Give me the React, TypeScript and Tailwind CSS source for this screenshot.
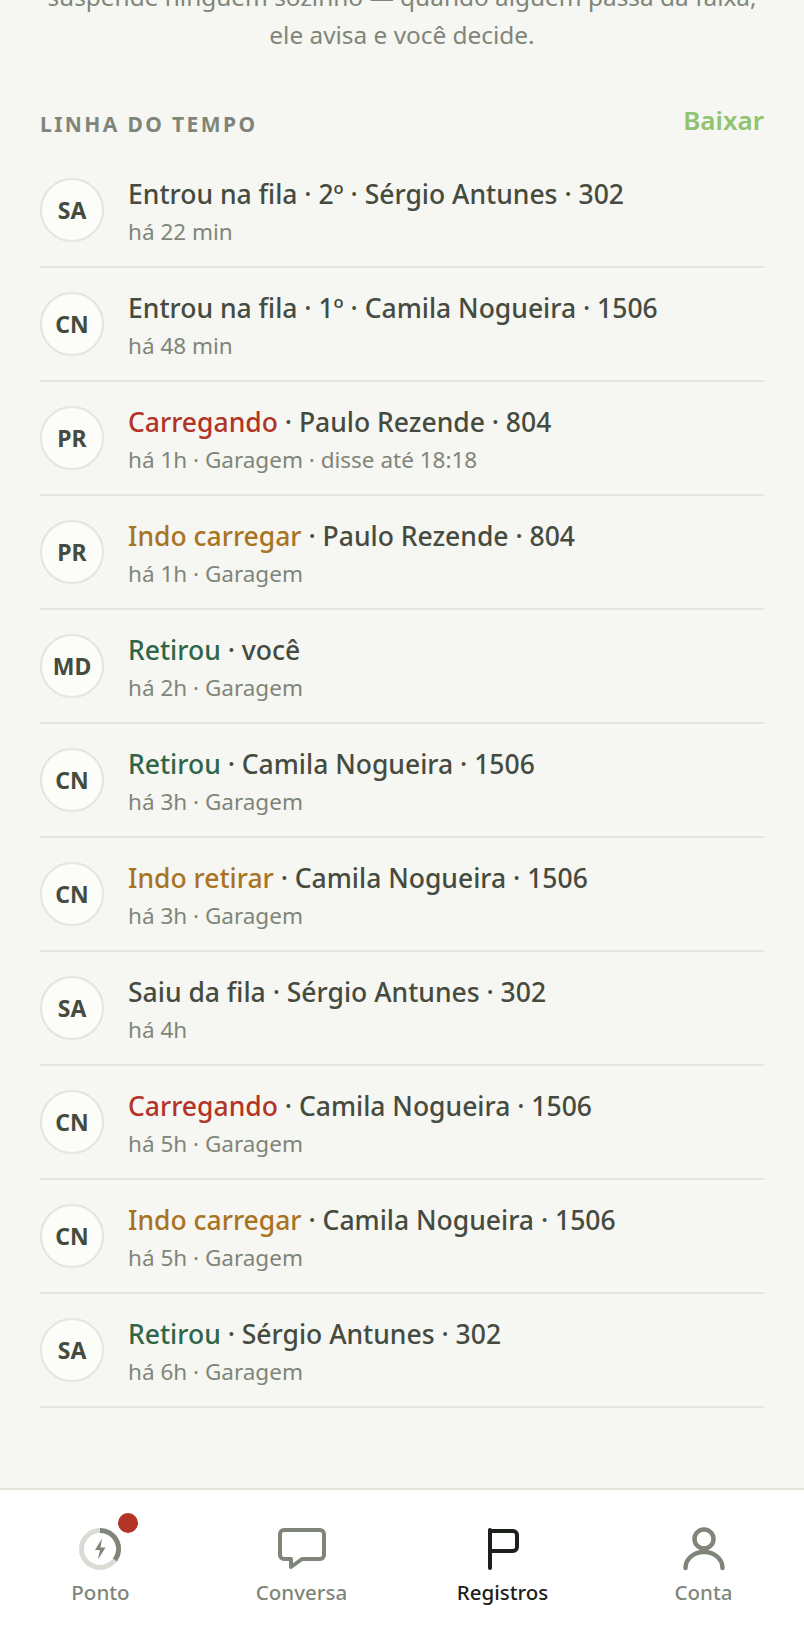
const rows = [
  { who: "SA", lead: "Entrou na fila", tone: "", rest: " · 2º · Sérgio Antunes · 302", sub: "há 22 min" },
  { who: "CN", lead: "Entrou na fila", tone: "", rest: " · 1º · Camila Nogueira · 1506", sub: "há 48 min" },
  { who: "PR", lead: "Carregando", tone: "text-[#b23427]", rest: " · Paulo Rezende · 804", sub: "há 1h · Garagem · disse até 18:18" },
  { who: "PR", lead: "Indo carregar", tone: "text-[#a8741f]", rest: " · Paulo Rezende · 804", sub: "há 1h · Garagem" },
  { who: "MD", lead: "Retirou", tone: "text-[#2f6549]", rest: " · você", sub: "há 2h · Garagem" },
  { who: "CN", lead: "Retirou", tone: "text-[#2f6549]", rest: " · Camila Nogueira · 1506", sub: "há 3h · Garagem" },
  { who: "CN", lead: "Indo retirar", tone: "text-[#a8741f]", rest: " · Camila Nogueira · 1506", sub: "há 3h · Garagem" },
  { who: "SA", lead: "Saiu da fila", tone: "", rest: " · Sérgio Antunes · 302", sub: "há 4h" },
  { who: "CN", lead: "Carregando", tone: "text-[#b23427]", rest: " · Camila Nogueira · 1506", sub: "há 5h · Garagem" },
  { who: "CN", lead: "Indo carregar", tone: "text-[#a8741f]", rest: " · Camila Nogueira · 1506", sub: "há 5h · Garagem" },
  { who: "SA", lead: "Retirou", tone: "text-[#2f6549]", rest: " · Sérgio Antunes · 302", sub: "há 6h · Garagem" },
];

function PontoIcon() {
  return (
    <span className="relative block h-[44px] w-[44px]">
      <svg viewBox="0 0 44 44" className="h-[44px] w-[44px]" fill="none">
        <circle cx="21" cy="22" r="18.5" stroke="#d9dbd5" strokeWidth="5" />
        <path d="M21 3.5A18.5 18.5 0 0 1 36 33" stroke="#7f8679" strokeWidth="5" />
        <path d="M23 11.5l-7 11.5h5l-2 9.5 7.5-12h-5z" fill="#7f8679" />
      </svg>
      <span className="absolute right-[-15px] top-[-14px] h-5 w-5 rounded-full bg-[#b23427]" />
    </span>
  );
}

function ChatIcon() {
  return (
    <svg viewBox="0 0 48 44" className="h-[44px] w-[48px]" fill="none" stroke="#7f8679" strokeWidth="4" strokeLinejoin="round" strokeLinecap="round">
      <path d="M6 3h36a4 4 0 0 1 4 4v21a4 4 0 0 1-4 4H24l-11 8v-8H6a4 4 0 0 1-4-4V7a4 4 0 0 1 4-4z" />
    </svg>
  );
}

function FlagIcon() {
  return (
    <svg viewBox="0 0 32 44" className="h-[44px] w-[32px]" fill="none" stroke="#1c201a" strokeWidth="4" strokeLinejoin="round" strokeLinecap="round">
      <path d="M3 3v38" />
      <path d="M3 4h23a4 4 0 0 1 4 4v12a4 4 0 0 1-4 4H3" />
    </svg>
  );
}

function PersonIcon() {
  return (
    <svg viewBox="0 0 42 44" className="h-[44px] w-[42px]" fill="none" stroke="#7f8679" strokeWidth="4.5" strokeLinecap="round">
      <circle cx="21" cy="12" r="9.5" />
      <path d="M2.5 41c0-9 8-16 18.5-16s18.5 7 18.5 16" />
    </svg>
  );
}

const tabs = [
  { label: "Ponto", icon: <PontoIcon />, active: false },
  { label: "Conversa", icon: <ChatIcon />, active: false },
  { label: "Registros", icon: <FlagIcon />, active: true },
  { label: "Conta", icon: <PersonIcon />, active: false },
];

export default function App() {
  return (
    <div className="flex h-[1640px] w-[804px] flex-col overflow-hidden bg-[#f6f6f2] font-['Noto_Sans','Open_Sans',sans-serif]">
      <main className="flex min-h-0 flex-1 flex-col justify-end px-10 pb-[80px]">
        <p className="whitespace-nowrap text-center text-[24.4px] leading-[38px] text-[#7f8679]">
          suspende ninguém sozinho — quando alguém passa da faixa,
          <br />
          ele avisa e você decide.
        </p>
        <div className="mt-[50px] flex items-start justify-between">
          <h2 className="pt-[6px] text-[21px] font-bold leading-[28px] tracking-[2.4px] text-[#7f8679]">LINHA DO TEMPO</h2>
          <button className="pt-[1px] text-[26px] font-semibold leading-[30px] text-[#8fc36f]">Baixar</button>
        </div>
        <ul className="mt-[16px]">
          {rows.map((r, i) => (
            <li key={i} className="flex h-[114px] items-center gap-[24px] border-b-2 border-[#e4e5dc]">
              <span className="flex h-[64px] w-[64px] shrink-0 items-center justify-center rounded-full border-2 border-[#e4e5dc] bg-[#fcfcf8] pt-[1px] text-[23px] font-bold text-[#454b3f]">
                {r.who}
              </span>
              <div className="min-w-0 pt-[2px]">
                <p className="text-[26.5px] font-medium leading-[36px] text-[#454b3f]">
                  <span className={r.tone}>{r.lead}</span>
                  {r.rest}
                </p>
                <p className="mt-[5px] text-[22.5px] leading-[30px] text-[#7f8679]">{r.sub}</p>
              </div>
            </li>
          ))}
        </ul>
      </main>
      <nav className="grid h-[152px] shrink-0 grid-cols-4 border-t-2 border-[#e4e5dc] bg-white">
        {tabs.map((t) => (
          <div key={t.label} className="flex flex-col items-center pt-[37px]">
            {t.icon}
            <span className={`mt-[7px] text-[20.5px] font-medium leading-[28px] ${t.active ? "text-[#1c201a]" : "text-[#7f8679]"}`}>
              {t.label}
            </span>
          </div>
        ))}
      </nav>
    </div>
  );
}
